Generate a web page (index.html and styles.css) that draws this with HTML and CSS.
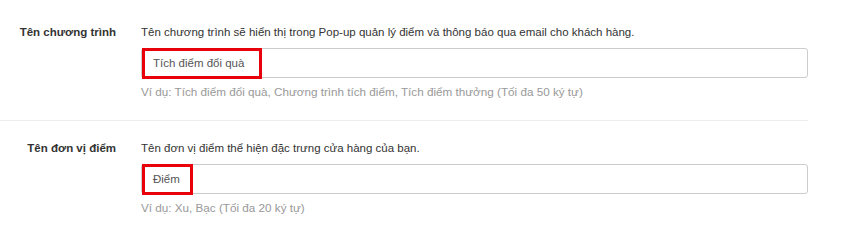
FILE: index.html
```html
<!DOCTYPE html>
<html lang="vi">
<head>
    <meta charset="UTF-8">
    <meta name="viewport" content="width=device-width, initial-scale=1.0">
    <title>Cài đặt chương trình</title>
    <link rel="stylesheet" href="styles.css">
</head>
<body>
    <div class="settings">
        <section class="form-row">
            <label class="row-label">Tên chương trình</label>
            <div class="row-field">
                <p class="field-desc">Tên chương trình sẽ hiển thị trong Pop-up quản lý điểm và thông báo qua email cho khách hàng.</p>
                <div class="text-input">
                    <span class="marked">Tích điểm đổi quà</span>
                </div>
                <p class="field-hint">Ví dụ: Tích điểm đổi quà, Chương trình tích điểm, Tích điểm thưởng (Tối đa 50 ký tự)</p>
            </div>
        </section>

        <section class="form-row">
            <label class="row-label">Tên đơn vị điểm</label>
            <div class="row-field">
                <p class="field-desc">Tên đơn vị điểm thể hiện đặc trưng cửa hàng của bạn.</p>
                <div class="text-input">
                    <span class="marked marked-short">Điểm</span>
                </div>
                <p class="field-hint">Ví dụ: Xu, Bạc (Tối đa 20 ký tự)</p>
            </div>
        </section>
    </div>
</body>
</html>
```

FILE: styles.css
```css
* {
    margin: 0;
    padding: 0;
    box-sizing: border-box;
}

body {
    font-family: 'Liberation Sans', Arial, sans-serif;
    font-size: 11.5px;
    line-height: 17px;
    color: #333;
    background-color: #fff;
}

.settings {
    width: 808px;
    padding-top: 5px;
}

.form-row {
    display: flex;
    padding: 19px 0 20px;
    border-bottom: 1px solid #eee;
}

.form-row:last-child {
    border-bottom: none;
}

.row-label {
    width: 141px;
    padding-right: 25px;
    text-align: right;
    font-weight: bold;
    color: #333;
}

.row-field {
    flex: 1;
}

.field-desc {
    margin-bottom: 7px;
}

.text-input {
    height: 30px;
    border: 1px solid #ccc;
    border-radius: 3px;
    color: #555;
    display: flex;
    align-items: stretch;
}

/* khung đỏ đánh dấu */
.marked {
    display: inline-flex;
    align-items: center;
    margin: -1px 0 -2px 0;
    padding: 0 15px 0 8px;
    border: 3px solid #e8000b;
}

.marked-short {
    padding-right: 10px;
}

.field-hint {
    margin-top: 5px;
    font-size: 11.7px;
    color: #999;
}
```
